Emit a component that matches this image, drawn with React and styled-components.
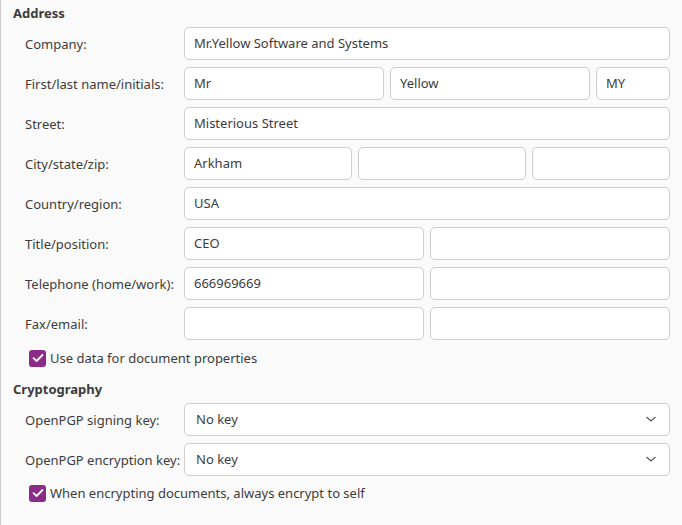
import styled, { createGlobalStyle } from "styled-components";

const Global = createGlobalStyle`
  html, body { margin: 0; padding: 0; background: #fafafa; }
  body { font-family: "Noto Sans", "Open Sans", sans-serif; font-size: 13px; color: #3c3c3c; }
`;

const Page = styled.div`
  width: 682px;
  height: 525px;
  box-sizing: border-box;
  border-left: 1px solid #c9c9c9;
  background: #fafafa;
  padding: 4px 12px 0 12px;
  overflow: hidden;
`;

const Heading = styled.div`
  font-weight: bold;
  height: 18px;
  line-height: 18px;
  margin-top: ${(p) => p.top || 0}px;
  margin-bottom: ${(p) => p.gap || 5}px;
`;

const Rows = styled.div`
  display: flex;
  flex-direction: column;
  gap: 7px;
  padding-left: 12px;
`;

const Row = styled.div`
  display: flex;
  align-items: center;
  height: 33px;
`;

const Label = styled.div`
  width: 159px;
  flex: none;
  white-space: nowrap;
`;

const Fields = styled.div`
  display: flex;
  gap: 6px;
  flex: 1;
`;

const Input = styled.div`
  box-sizing: border-box;
  height: 33px;
  width: ${(p) => (p.w ? p.w + "px" : "auto")};
  flex: ${(p) => (p.w ? "none" : 1)};
  background: #fff;
  border: 1px solid #cdcdcd;
  border-radius: 5px;
  padding: 0 9px 1px 9px;
  display: flex;
  align-items: center;
  justify-content: space-between;
  white-space: nowrap;
  overflow: hidden;
`;

const Select = styled(Input)`
  padding: 0 12px 1px 11px;
`;

const Check = styled.label`
  display: flex;
  align-items: center;
  gap: 4px;
  height: 18px;
  margin: ${(p) => p.top || 8}px 0 0 16px;
`;

const Box = styled.span`
  width: 17px;
  height: 17px;
  border-radius: 3px;
  background: #8b2b87;
  display: flex;
  align-items: center;
  justify-content: center;
`;

const Tick = () => (
  <Box>
    <svg width="12" height="10" viewBox="0 0 12 10">
      <path d="M1.5 5.2 L4.6 8 L10.5 2" fill="none" stroke="#fff" strokeWidth="1.8" strokeLinecap="round" strokeLinejoin="round" />
    </svg>
  </Box>
);

const Chevron = () => (
  <svg width="12" height="8" viewBox="0 0 12 8">
    <path d="M1.5 2 L6 6 L10.5 2" fill="none" stroke="#555" strokeWidth="1.1" />
  </svg>
);

const address = [
  ["Company:", [["Mr.Yellow Software and Systems"]]],
  ["First/last name/initials:", [["Mr", 200], ["Yellow", 200], ["MY"]]],
  ["Street:", [["Misterious Street"]]],
  ["City/state/zip:", [["Arkham", 168], ["", 168], [""]]],
  ["Country/region:", [["USA"]]],
  ["Title/position:", [["CEO"], [""]]],
  ["Telephone (home/work):", [["666969669"], [""]]],
  ["Fax/email:", [[""], [""]]],
];

export default function App() {
  return (
    <Page>
      <Global />
      <Heading>Address</Heading>
      <Rows>
        {address.map(([label, fields]) => (
          <Row key={label}>
            <Label>{label}</Label>
            <Fields>
              {fields.map(([v, w], i) => (
                <Input key={i} w={w}>{v}</Input>
              ))}
            </Fields>
          </Row>
        ))}
      </Rows>
      <Check top={9}>
        <Tick />
        Use data for document properties
      </Check>
      <Heading top={13} gap={5}>Cryptography</Heading>
      <Rows>
        <Row>
          <Label>OpenPGP signing key:</Label>
          <Fields>
            <Select>No key<Chevron /></Select>
          </Fields>
        </Row>
        <Row>
          <Label>OpenPGP encryption key:</Label>
          <Fields>
            <Select>No key<Chevron /></Select>
          </Fields>
        </Row>
      </Rows>
      <Check top={8}>
        <Tick />
        When encrypting documents, always encrypt to self
      </Check>
    </Page>
  );
}
